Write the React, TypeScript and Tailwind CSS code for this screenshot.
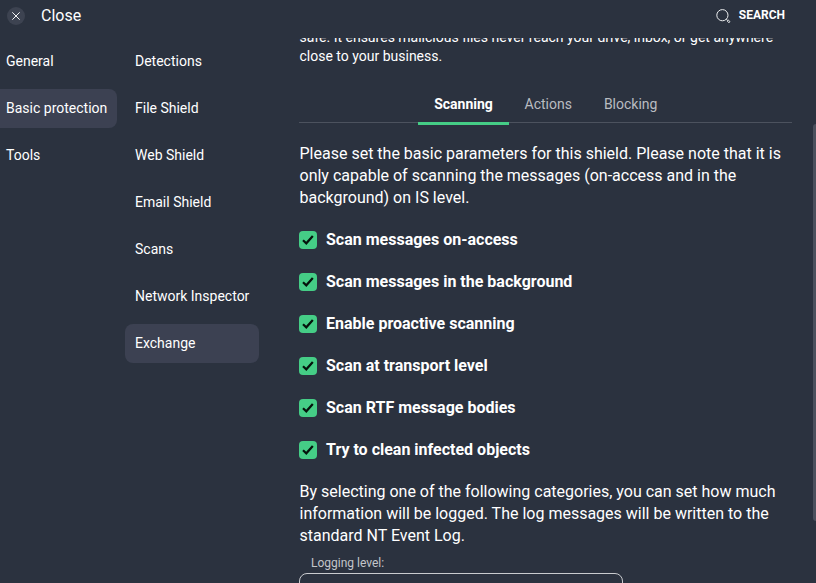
import { useState } from "react";

const sections = ["General", "Basic protection", "Tools"];

const pages = [
  "Detections",
  "File Shield",
  "Web Shield",
  "Email Shield",
  "Scans",
  "Network Inspector",
  "Exchange",
];

const options = [
  "Scan messages on-access",
  "Scan messages in the background",
  "Enable proactive scanning",
  "Scan at transport level",
  "Scan RTF message bodies",
  "Try to clean infected objects",
];

function Header() {
  return (
    <header className="flex h-[38px] shrink-0 items-start justify-between pl-[7px] pr-[31px] pt-[6px]">
      <button className="flex items-center">
        <span className="flex size-[18px] items-center justify-center rounded-full bg-[#3d4351]">
          <svg width="8" height="8" viewBox="0 0 8 8" fill="none" stroke="#f4f5f6" strokeWidth="1">
            <path d="M0.3 0.3L7.7 7.7M7.7 0.3L0.3 7.7" />
          </svg>
        </span>
        <span className="ml-4 text-base leading-5">Close</span>
      </button>
      <button className="flex items-center">
        <svg className="mt-[3px]" width="15" height="15" viewBox="0 0 15 15" fill="none" stroke="#eceeef">
          <circle cx="6.4" cy="6.2" r="5.6" strokeWidth="1" />
          <path d="M10.3 10.1L11.3 11.1" strokeWidth="1" />
          <path d="M11.1 11.9L12.1 10.9L14 12.7L12.9 13.8Z" strokeWidth="0.9" />
        </svg>
        <span className="ml-2 text-xs font-bold leading-[18px]">SEARCH</span>
      </button>
    </header>
  );
}

function CheckRow({ label }: { label: string }) {
  const [on, setOn] = useState(true);

  return (
    <button className="flex h-[18px] items-center gap-[9px]" onClick={() => setOn(!on)}>
      <span className="flex size-[18px] items-center justify-center rounded bg-[#45cd86]">
        {on && (
          <svg width="12" height="10" viewBox="0 0 12 10" fill="none" stroke="#05120b" strokeWidth="2.2">
            <path d="M1 5.2L4.3 8.3L10.8 1" />
          </svg>
        )}
      </span>
      <span className="whitespace-nowrap text-base font-bold leading-[18px]">{label}</span>
    </button>
  );
}

export default function App() {
  return (
    <div className="flex h-[583px] w-[816px] flex-col overflow-hidden bg-[#2b323f] font-['Roboto',sans-serif] text-white">
      <Header />
      <div className="flex min-h-0 flex-1">
        <nav className="flex w-[125px] shrink-0 flex-col gap-2 pt-1">
          {sections.map((s) => (
            <a
              key={s}
              className={`flex h-[39px] w-[117px] items-center whitespace-nowrap rounded-r-lg pb-[2px] pl-[6px] text-sm ${
                s === "Basic protection" ? "bg-[#3c4152]" : ""
              }`}
            >
              {s}
            </a>
          ))}
        </nav>
        <nav className="flex w-[174px] shrink-0 flex-col gap-2 pt-1">
          {pages.map((p) => (
            <a
              key={p}
              className={`flex h-[39px] w-[134px] items-center whitespace-nowrap rounded-lg pb-[2px] pl-[10px] text-sm ${
                p === "Exchange" ? "bg-[#3c4152]" : ""
              }`}
            >
              {p}
            </a>
          ))}
        </nav>

        <main className="w-[493px] shrink-0 overflow-hidden">
          <p className="-mt-[10px] whitespace-nowrap pl-[0.5px] text-sm leading-[19px]">
            safe. It ensures malicious files never reach your drive, inbox, or get anywhere
            <br />
            close to your business.
          </p>

          <div className="mt-5 flex h-[37px] border-b border-[#4c525e] pl-[119px] text-sm leading-9 text-[#b9bcc1]">
            <span className="h-[39px] w-[91px] shrink-0 border-b-[3px] border-[#45cd86] text-center font-bold text-white">
              Scanning
            </span>
            <span className="ml-[15.5px]">Actions</span>
            <span className="ml-8">Blocking</span>
          </div>

          <p className="mt-5 whitespace-nowrap pl-[0.5px] text-base leading-[22px]">
            Please set the basic parameters for this shield. Please note that it is
            <br />
            only capable of scanning the messages (on-access and in the
            <br />
            background) on IS level.
          </p>

          <div className="mt-[22px] flex flex-col gap-6">
            {options.map((o) => (
              <CheckRow key={o} label={o} />
            ))}
          </div>

          <p className="mt-[22px] whitespace-nowrap pl-[0.5px] text-base leading-[22px]">
            By selecting one of the following categories, you can set how much
            <br />
            information will be logged. The log messages will be written to the
            <br />
            standard NT Event Log.
          </p>

          <label className="mt-2 block pl-3 text-xs leading-4 text-[#c3c6ca]">Logging level:</label>
          <div className="mt-[2px] h-10 w-[324px] rounded-lg border border-[#c9cbcf]" />
        </main>

        <div className="ml-auto mt-[86px] h-[397px] w-[3px] rounded-l-[3px] bg-[#4b505d]" />
      </div>
    </div>
  );
}
